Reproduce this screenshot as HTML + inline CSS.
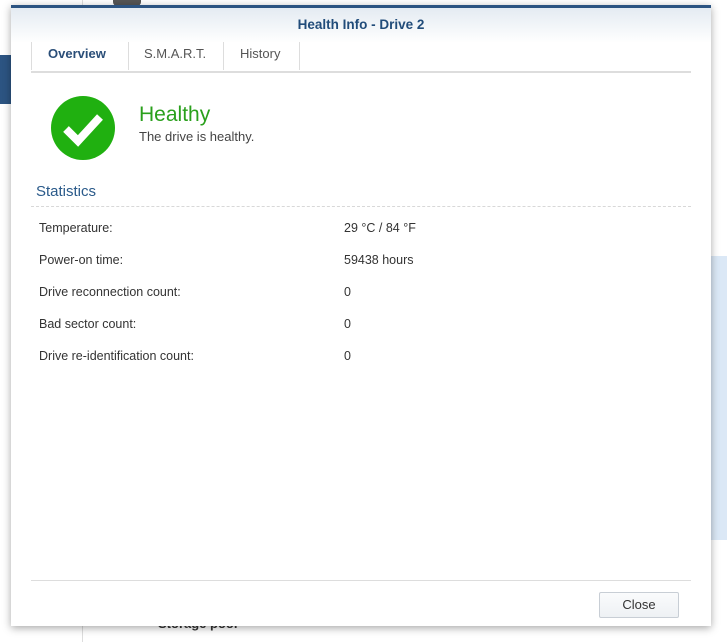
<!DOCTYPE html>
<html><head><style>
body{margin:0;width:727px;height:642px;position:relative;overflow:hidden;background:#fff;font-family:"Liberation Sans",sans-serif;}
.abs{position:absolute}
.t{position:absolute;font-size:12.5px;color:#333}
</style></head><body>
<div class="abs" style="left:82px;top:0;width:1px;height:642px;background:#ddd"></div>
<div class="abs" style="left:0;top:55px;width:11px;height:49px;background:#2c5482"></div>
<div class="abs" style="left:711px;top:256px;width:16px;height:284px;background:#dbe8f6"></div>
<div class="abs" style="left:113px;top:0;width:28px;height:6px;background:#555;border-radius:0 0 4px 4px"></div>
<div class="abs" style="left:158px;top:616px;font-size:13px;font-weight:bold;color:#333">Storage pool</div>
<div class="abs" style="left:11px;top:5px;width:700px;height:621px;background:#fff;box-shadow:0 2px 8px rgba(0,0,0,.35);border-top:3px solid #2c5482;box-sizing:border-box">
 <div class="abs" style="left:0;top:0;width:700px;height:35px;background:linear-gradient(#e4ebf2,#fff)"></div>
 <div class="abs" style="left:0;top:9px;width:700px;text-align:center;font-size:13.5px;font-weight:bold;color:#214c7a">Health Info - Drive 2</div>
 <div class="abs" style="left:20px;top:63px;width:660px;height:2px;background:#ddd"></div>
 <div class="abs" style="left:20px;top:34px;width:1px;height:28px;background:#ddd"></div>
 <div class="abs" style="left:117px;top:34px;width:1px;height:28px;background:#ddd"></div>
 <div class="abs" style="left:212px;top:34px;width:1px;height:28px;background:#ddd"></div>
 <div class="abs" style="left:288px;top:34px;width:1px;height:28px;background:#ddd"></div>
 <div class="abs" style="left:37px;top:38px;font-size:13px;font-weight:bold;color:#2a4e78">Overview</div>
 <div class="abs" style="left:133px;top:38px;font-size:13px;color:#555">S.M.A.R.T.</div>
 <div class="abs" style="left:229px;top:38px;font-size:13px;color:#555">History</div>
 <svg class="abs" style="left:40px;top:88px" width="64" height="64"><circle cx="32" cy="32" r="32" fill="#20b010"/><path d="M15 33 L27 45 L49 21" stroke="#fff" stroke-width="8" fill="none"/></svg>
 <div class="abs" style="left:128px;top:95px;font-size:21px;color:#2aa01c">Healthy</div>
 <div class="abs" style="left:128px;top:121px;font-size:13px;color:#444">The drive is healthy.</div>
 <div class="abs" style="left:25px;top:175px;font-size:15px;color:#2a5a8a">Statistics</div>
 <div class="abs" style="left:20px;top:198px;width:660px;border-top:1px dashed #d8d8d8"></div>
 <div class="t" style="left:28px;top:213px">Temperature:</div><div class="t" style="left:333px;top:213px">29 °C / 84 °F</div>
 <div class="t" style="left:28px;top:245px">Power-on time:</div><div class="t" style="left:333px;top:245px">59438 hours</div>
 <div class="t" style="left:28px;top:277px">Drive reconnection count:</div><div class="t" style="left:333px;top:277px">0</div>
 <div class="t" style="left:28px;top:309px">Bad sector count:</div><div class="t" style="left:333px;top:309px">0</div>
 <div class="t" style="left:28px;top:341px">Drive re-identification count:</div><div class="t" style="left:333px;top:341px">0</div>
 <div class="abs" style="left:20px;top:572px;width:660px;height:1px;background:#ddd"></div>
 <div class="abs" style="left:588px;top:584px;width:80px;height:26px;border:1px solid #c8ced5;border-radius:2px;background:linear-gradient(#fafbfc,#eef1f4);box-sizing:border-box;text-align:center;line-height:24px;font-size:13px;color:#333">Close</div>
</div>
</body></html>
